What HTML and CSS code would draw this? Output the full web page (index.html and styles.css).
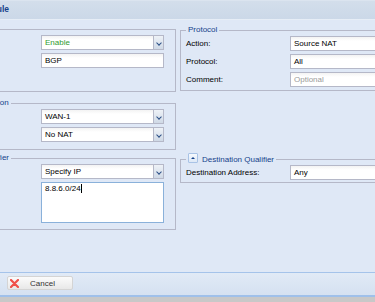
FILE: index.html
```html
<!DOCTYPE html>
<html lang="en">
<head>
    <meta charset="UTF-8">
    <title>Edit NAT Rule</title>
    <link rel="stylesheet" href="styles.css">
</head>
<body>
    <div class="window">
        <div class="window-header">Edit NAT Rule</div>

        <div class="window-body">
            <div class="column">
                <fieldset class="fs fs-general">
                    <div class="row">
                        <label></label>
                        <div class="field combo enabled">Enable<span class="trigger"></span></div>
                    </div>
                    <div class="row">
                        <label></label>
                        <div class="field">BGP</div>
                    </div>
                </fieldset>

                <fieldset class="fs fs-translation">
                    <legend>Source Translation</legend>
                    <div class="row">
                        <label></label>
                        <div class="field combo">WAN-1<span class="trigger"></span></div>
                    </div>
                    <div class="row">
                        <label></label>
                        <div class="field combo">No NAT<span class="trigger"></span></div>
                    </div>
                </fieldset>

                <fieldset class="fs fs-source">
                    <legend>Source IP Qualifier</legend>
                    <div class="row">
                        <label></label>
                        <div class="field combo">Specify IP<span class="trigger"></span></div>
                    </div>
                    <div class="row row-tall">
                        <label></label>
                        <div class="field textarea">8.8.6.0/24<span class="caret"></span></div>
                    </div>
                </fieldset>
            </div>

            <div class="column">
                <fieldset class="fs fs-protocol">
                    <legend>Protocol</legend>
                    <div class="row wide">
                        <label>Action:</label>
                        <div class="field">Source NAT</div>
                    </div>
                    <div class="row wide">
                        <label>Protocol:</label>
                        <div class="field">All</div>
                    </div>
                    <div class="row wide">
                        <label>Comment:</label>
                        <div class="field placeholder">Optional</div>
                    </div>
                </fieldset>

                <fieldset class="fs fs-destination">
                    <legend><span class="collapse-tool"></span>Destination Qualifier</legend>
                    <div class="row wide">
                        <label>Destination Address:</label>
                        <div class="field">Any</div>
                    </div>
                </fieldset>
            </div>
        </div>

        <div class="window-footer">
            <button type="button" class="btn-cancel">
                <svg class="icon-x" width="9" height="9" viewBox="0 0 9 9">
                    <path d="M1 1 L8 8 M8 1 L1 8" stroke="#f0504a" stroke-width="2.2" stroke-linecap="round"/>
                </svg>
                <span>Cancel</span>
            </button>
        </div>
    </div>
</body>
</html>
```

FILE: styles.css
```css
body {
    margin: 0;
    height: 302px;
    overflow: hidden;
    background-color: #c8c8c8;
    font-family: "Liberation Sans", Arial, sans-serif;
    font-size: 8px;
    color: #000;
}
.window {
    width: 480px;
    margin-left: -80px;
}
.window-header {
    height: 20px;
    box-sizing: border-box;
    line-height: 17px;
    padding-left: 33px;
    border-top: 1px solid #dbe4ef;
    border-bottom: 1px solid #e6edf6;
    background: linear-gradient(#d3deeb, #cbd8e8);
    color: #15428b;
    font-weight: bold;
    font-size: 8.5px;
}
.window-body {
    display: grid;
    grid-template-columns: 243px 1fr;
    column-gap: 4px;
    align-items: start;
    height: 252px;
    padding-left: 13px;
    box-sizing: border-box;
    background-color: #dfe8f6;
}
.fs {
    margin: 0;
    padding: 1px 11px 3px 6px;
    border: 1px solid #b5b8c8;
    min-width: 0;
}
.fs legend {
    padding: 0 2px;
    line-height: 10px;
    color: #15428b;
}
.fs-general {
    margin-top: 9px;
    padding-top: 5px;
    padding-bottom: 20px;
}
.fs-translation {
    margin-top: 6px;
    padding-bottom: 4px;
}
.fs-source {
    margin-top: 3px;
}
.fs-protocol {
    margin-top: 5px;
    padding: 1px 0 0 5px;
}
.fs-destination {
    margin-top: 62px;
    padding: 0 0 0 5px;
}
.row {
    display: flex;
    height: 15px;
    margin-bottom: 3px;
}
.row label {
    width: 101px;
    flex-shrink: 0;
    line-height: 15px;
    color: #000;
}
.row.wide label {
    width: 104px;
}
.row-tall {
    height: 41px;
}
.field {
    position: relative;
    width: 123px;
    height: 15px;
    box-sizing: border-box;
    padding-left: 3px;
    line-height: 13px;
    border: 1px solid #b5b8c8;
    background: linear-gradient(#f3f3f3, #fff 4px);
    white-space: nowrap;
}
.row.wide .field {
    flex: 1;
    width: auto;
}
.fs-destination .row {
    margin-bottom: 2px;
}
.enabled {
    color: #2f9a2f;
}
.placeholder {
    color: #9a9a9a;
}
.trigger {
    position: absolute;
    top: -1px;
    right: -1px;
    width: 11px;
    height: 15px;
    box-sizing: border-box;
    border: 1px solid #b5b8c8;
    background: linear-gradient(#eef2f7, #cfd9e6);
}
.trigger::after {
    content: "";
    position: absolute;
    left: 3px;
    top: 5px;
    width: 3px;
    height: 3px;
    border-right: 1px solid #2b4f86;
    border-bottom: 1px solid #2b4f86;
    transform: rotate(45deg);
}
.textarea {
    height: 41px;
    padding-top: 1px;
    line-height: 9px;
    border-color: #8ab1da;
    background: #fff;
}
.caret {
    display: inline-block;
    width: 1px;
    height: 9px;
    vertical-align: top;
    background-color: #000;
}
.collapse-tool {
    display: inline-block;
    width: 8px;
    height: 8px;
    margin-right: 4px;
    vertical-align: -1px;
    border: 1px solid #a9c3e6;
    border-radius: 1px;
    background: linear-gradient(#f6f9fd, #dde8f6);
    position: relative;
}
.collapse-tool::after {
    content: "";
    position: absolute;
    left: 2px;
    top: 3px;
    border-left: 2px solid transparent;
    border-right: 2px solid transparent;
    border-bottom: 2px solid #15428b;
}
.window-footer {
    height: 25px;
    box-sizing: border-box;
    padding: 3px 0 0 87px;
    border-top: 1px solid #a5c3ea;
    border-bottom: 2px solid #9fc0ea;
    background: linear-gradient(#e1eaf6, #d5e1f1);
}
.btn-cancel {
    display: flex;
    align-items: center;
    width: 66px;
    height: 14px;
    padding: 0 0 0 2px;
    border: 1px solid #d4d4d4;
    border-radius: 2px;
    background: linear-gradient(#fbfbfb, #e8e8e8);
    font-family: inherit;
    font-size: 8px;
    color: #333;
    cursor: pointer;
}
.btn-cancel span {
    flex: 1;
    text-align: center;
    padding-right: 6px;
}
```
